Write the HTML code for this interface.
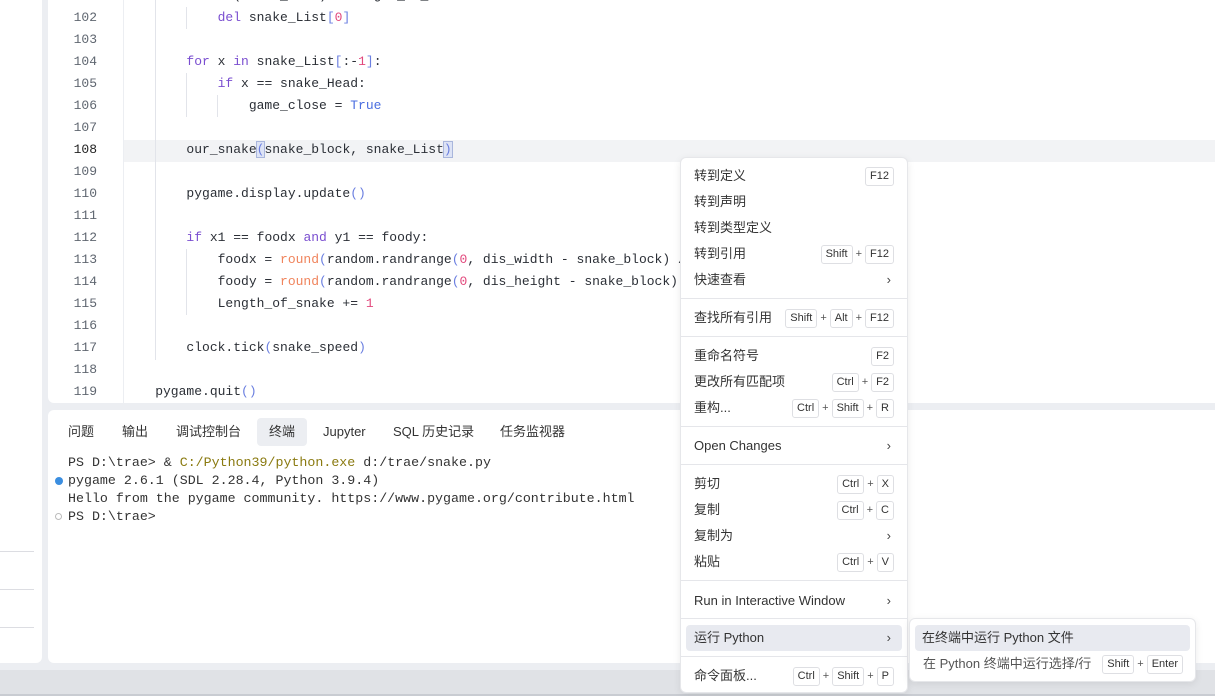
<!DOCTYPE html>
<html><head><meta charset="utf-8">
<style>
*{margin:0;padding:0;box-sizing:border-box}
body{width:1215px;height:696px;background:#eceef2;position:relative;overflow:hidden;font-family:"Liberation Sans","Noto Sans CJK SC",sans-serif;color:#333}
.abs{position:absolute}
#left{left:0;top:0;width:42px;height:663px;background:#fff;border-radius:0 0 6px 0}
.hl{left:0;width:34px;height:1px;background:#dcdde2}
#ed{left:48px;top:0;width:1167px;height:403px;background:#fff;border-radius:0 0 0 6px;overflow:hidden}
.ln{position:absolute;left:0;width:49px;text-align:right;font:13px "Liberation Mono",monospace;color:#5f6670;height:22px;line-height:22px}
.cd{position:absolute;left:76px;font:13px "Liberation Mono",monospace;color:#2b2f36;height:22px;line-height:22px;white-space:pre}
.k{color:#7a4ed0}.n{color:#e2487c}.t{color:#4a6ee0}.f{color:#f0845c}.b{color:#6b7fe0}
.g{position:absolute;width:1px;background:#e2e4ea}
#term{left:48px;top:410px;width:1167px;height:253px;background:#fff;border-radius:6px 0 0 6px}
.tab{position:absolute;top:8px;height:28px;line-height:28px;font-size:13px;color:#333;padding:0 10px}
.tl{position:absolute;left:20px;font:13.3px "Liberation Mono",monospace;color:#333;white-space:pre;height:18px;line-height:18px}
#bar{left:0;top:670px;width:1215px;height:24px;background:#e0e2e6}
#bar2{left:0;top:694px;width:1215px;height:2px;background:#c9ccd2}
.menu{background:#fff;border:1px solid #e6e7ea;border-radius:6px;box-shadow:0 2px 8px rgba(0,0,0,.08)}
.it{position:absolute;left:0;right:0;height:26px;line-height:26px;font-size:13px;color:#333;padding-left:13px}
.sep{position:absolute;left:0;right:0;height:1px;background:#e5e6ea}
.ks{position:absolute;right:13px;top:0;height:26px;display:flex;align-items:center;gap:3px;font-size:11px;line-height:normal;color:#333}
.ks span.key{border:1px solid #dedfe3;border-radius:3px;height:19px;line-height:17px;padding:0 4px;background:#fff;display:inline-block}
.ks span.p{color:#555}
.arr{position:absolute;right:16px;top:0;font-size:13px;color:#444}
</style></head><body>
<div class="abs" id="left"></div>
<div class="abs hl" style="top:551px"></div>
<div class="abs hl" style="top:589px"></div>
<div class="abs hl" style="top:627px"></div>

<div class="abs" id="ed">
 <div style="position:absolute;left:75px;top:140px;width:1100px;height:22px;background:#f2f3f5"></div>
 <div style="position:absolute;left:75px;top:0;width:1px;height:403px;background:#eceef2"></div>
 <div class="g" style="left:107px;top:0;height:360px"></div>
 <div class="g" style="left:138px;top:7px;height:22px"></div>
 <div class="g" style="left:138px;top:73px;height:44px"></div>
 <div class="g" style="left:169px;top:95px;height:22px"></div>
 <div class="g" style="left:138px;top:249px;height:66px"></div>
 <div class="ln" style="top:-15px">101</div><div class="cd" style="top:-15px">        <span class="k">if</span> <span class="f">len</span>(snake_List) > Length_of_snake:</div>
 <div class="ln" style="top:7px">102</div><div class="cd" style="top:7px">            <span class="k">del</span> snake_List<span class="b">[</span><span class="n">0</span><span class="b">]</span></div>
 <div class="ln" style="top:29px">103</div>
 <div class="ln" style="top:51px">104</div><div class="cd" style="top:51px">        <span class="k">for</span> x <span class="k">in</span> snake_List<span class="b">[</span>:-<span class="n">1</span><span class="b">]</span>:</div>
 <div class="ln" style="top:73px">105</div><div class="cd" style="top:73px">            <span class="k">if</span> x == snake_Head:</div>
 <div class="ln" style="top:95px">106</div><div class="cd" style="top:95px">                game_close = <span class="t">True</span></div>
 <div class="ln" style="top:117px">107</div>
 <div class="ln" style="top:139px;color:#222">108</div><div class="cd" style="top:139px">        our_snake<span class="b" style="background:#dde3f5;outline:1px solid #a9b6dc">(</span>snake_block, snake_List<span class="b" style="background:#dde3f5;outline:1px solid #a9b6dc">)</span></div>
 <div class="ln" style="top:161px">109</div>
 <div class="ln" style="top:183px">110</div><div class="cd" style="top:183px">        pygame.display.update<span class="b">()</span></div>
 <div class="ln" style="top:205px">111</div>
 <div class="ln" style="top:227px">112</div><div class="cd" style="top:227px">        <span class="k">if</span> x1 == foodx <span class="k">and</span> y1 == foody:</div>
 <div class="ln" style="top:249px">113</div><div class="cd" style="top:249px">            foodx = <span class="f">round</span><span class="b">(</span>random.randrange<span class="b">(</span><span class="n">0</span>, dis_width - snake_block) / <span class="n">10.0</span>) * <span class="n">10.0</span></div>
 <div class="ln" style="top:271px">114</div><div class="cd" style="top:271px">            foody = <span class="f">round</span><span class="b">(</span>random.randrange<span class="b">(</span><span class="n">0</span>, dis_height - snake_block) / <span class="n">10.0</span>) * <span class="n">10.0</span></div>
 <div class="ln" style="top:293px">115</div><div class="cd" style="top:293px">            Length_of_snake += <span class="n">1</span></div>
 <div class="ln" style="top:315px">116</div>
 <div class="ln" style="top:337px">117</div><div class="cd" style="top:337px">        clock.tick<span class="b">(</span>snake_speed<span class="b">)</span></div>
 <div class="ln" style="top:359px">118</div>
 <div class="ln" style="top:381px">119</div><div class="cd" style="top:381px">    pygame.quit<span class="b">()</span></div>
</div>

<div class="abs" id="term">
 <div class="tab" style="left:10px">问题</div>
 <div class="tab" style="left:64px">输出</div>
 <div class="tab" style="left:118px">调试控制台</div>
 <div class="tab" style="left:209px;background:#eceef2;border-radius:4px;padding:0 12px">终端</div>
 <div class="tab" style="left:265px">Jupyter</div>
 <div class="tab" style="left:335px">SQL 历史记录</div>
 <div class="tab" style="left:442px">任务监视器</div>
 <div class="tl" style="top:44px">PS D:\trae> &amp; <span style="color:#8a7a10">C:/Python39/python.exe</span> d:/trae/snake.py</div>
 <div style="position:absolute;left:7px;top:67px;width:8px;height:8px;border-radius:50%;background:#3b8ee0"></div>
 <div class="tl" style="top:62px">pygame 2.6.1 (SDL 2.28.4, Python 3.9.4)</div>
 <div class="tl" style="top:80px">Hello from the pygame community. https://www.pygame.org/contribute.html</div>
 <div style="position:absolute;left:7px;top:103px;width:7px;height:7px;border-radius:50%;border:1px solid #bbb"></div>
 <div class="tl" style="top:98px">PS D:\trae></div>
</div>

<div class="abs" id="bar"></div>
<div class="abs" id="bar2"></div>

<div class="abs menu" style="left:680px;top:157px;width:228px;height:536px">
 <div class="it" style="top:5px">转到定义<div class="ks"><span class="key">F12</span></div></div>
 <div class="it" style="top:31px">转到声明</div>
 <div class="it" style="top:57px">转到类型定义</div>
 <div class="it" style="top:83px">转到引用<div class="ks"><span class="key">Shift</span><span class="p">+</span><span class="key">F12</span></div></div>
 <div class="it" style="top:109px">快速查看<span class="arr">›</span></div>
 <div class="sep" style="top:140px"></div>
 <div class="it" style="top:147px">查找所有引用<div class="ks"><span class="key">Shift</span><span class="p">+</span><span class="key">Alt</span><span class="p">+</span><span class="key">F12</span></div></div>
 <div class="sep" style="top:178px"></div>
 <div class="it" style="top:185px">重命名符号<div class="ks"><span class="key">F2</span></div></div>
 <div class="it" style="top:211px">更改所有匹配项<div class="ks"><span class="key">Ctrl</span><span class="p">+</span><span class="key">F2</span></div></div>
 <div class="it" style="top:237px">重构...<div class="ks"><span class="key">Ctrl</span><span class="p">+</span><span class="key">Shift</span><span class="p">+</span><span class="key">R</span></div></div>
 <div class="sep" style="top:268px"></div>
 <div class="it" style="top:275px">Open Changes<span class="arr">›</span></div>
 <div class="sep" style="top:306px"></div>
 <div class="it" style="top:313px">剪切<div class="ks"><span class="key">Ctrl</span><span class="p">+</span><span class="key">X</span></div></div>
 <div class="it" style="top:339px">复制<div class="ks"><span class="key">Ctrl</span><span class="p">+</span><span class="key">C</span></div></div>
 <div class="it" style="top:365px">复制为<span class="arr">›</span></div>
 <div class="it" style="top:391px">粘贴<div class="ks"><span class="key">Ctrl</span><span class="p">+</span><span class="key">V</span></div></div>
 <div class="sep" style="top:422px"></div>
 <div class="it" style="top:430px">Run in Interactive Window<span class="arr">›</span></div>
 <div class="sep" style="top:460px"></div>
 <div class="it" style="top:467px;left:5px;right:5px;padding-left:8px;background:#e8eaf0;border-radius:4px">运行 Python<span class="arr" style="right:11px">›</span></div>
 <div class="sep" style="top:498px"></div>
 <div class="it" style="top:505px">命令面板...<div class="ks"><span class="key">Ctrl</span><span class="p">+</span><span class="key">Shift</span><span class="p">+</span><span class="key">P</span></div></div>
</div>

<div class="abs menu" style="left:909px;top:618px;width:287px;height:64px">
 <div class="it" style="top:6px;left:5px;right:5px;padding-left:7px;background:#e8eaf0;border-radius:4px">在终端中运行 Python 文件</div>
 <div class="it" style="top:32px;color:#555">在 Python 终端中运行选择/行<div class="ks" style="right:12px"><span class="key">Shift</span><span class="p">+</span><span class="key">Enter</span></div></div>
</div>
</body></html>
